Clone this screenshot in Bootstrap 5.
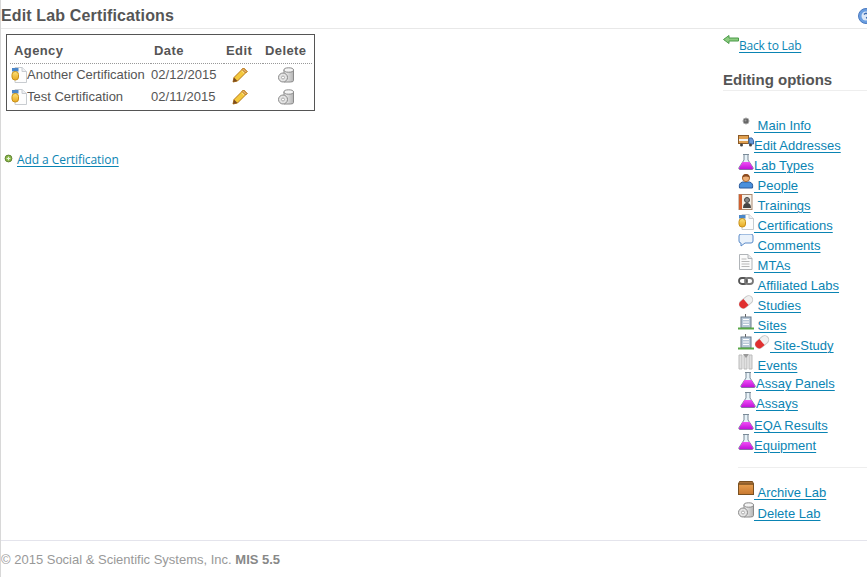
<!DOCTYPE html>
<html lang="en">
<head>
<meta charset="utf-8">
<title>Edit Lab Certifications</title>
<link href="https://cdn.jsdelivr.net/npm/bootstrap@5.3.0/dist/css/bootstrap.min.css" rel="stylesheet">
<style>
html,body{height:100%}
body{font-family:"Liberation Sans",Arial,sans-serif;font-size:13px;color:#555;background:#fff;border-left:1px solid #d8d8d8;overflow:hidden}
.shell{height:577px}
.topbar{height:29px;border-bottom:1px solid #e8e8e8}
.topbar h1{font-size:16px;font-weight:700;color:#555;margin:0;line-height:31px;letter-spacing:.14px}
.help{position:absolute;top:8px;left:858px}
a.lnk{color:#0a84b3;text-decoration:underline;text-underline-offset:2px;text-decoration-thickness:1px}
.hand{font-family:"Open Sans",sans-serif;font-size:12px;letter-spacing:-.07px}
.hand2{letter-spacing:-.2px}
.mainpane{padding:5px 0 0 5px;width:722px}
.certbox{width:309px;height:77px;border:1px solid #555;padding:3px 3px 0 3px}
.certs{border-collapse:collapse;width:302px;table-layout:fixed}
.certs th{font-weight:700;font-size:13px;height:25px;border-bottom:1px dotted #999;padding:0;letter-spacing:.4px}
.certs td{height:22px;line-height:22px;padding:0;white-space:nowrap;letter-spacing:.05px}
.certs td.agn{padding-left:1px;letter-spacing:0}
.certs svg{vertical-align:-4px}
.certs .pa{padding-left:4px;width:141px}
.certs .pd{padding-left:3px;width:73px}
.certs .pe{padding-left:2px;width:39px}
.certs .pf{padding-left:2px}
.certs .pp{padding-left:8px}
.certs .px{padding-left:15px}
.addrow{margin-top:41px;margin-left:-2px;height:16px;line-height:16px}
.sidepane{width:144px;padding-top:6px}
.backrow{height:22px;line-height:22px}
.backrow svg{position:relative;top:-1px}
.sidepane h2{font-size:15px;font-weight:700;color:#555;line-height:18px;margin:14px 0 0;padding-bottom:1px;border-bottom:1px solid #eee}
.menu{list-style:none;margin:0;padding:25px 0 0 15px}
.menu li{height:20px;line-height:20px;white-space:nowrap}
.menu li.h18{height:18px}
.menu li.h22{height:22px}
.menu li.h21{height:21px}
.menu svg{vertical-align:-2px;position:relative;top:-2px}
.ind{margin-left:2px}
.rule{border-top:1px solid #eee;margin:11px 0 15px 15px;height:0}
.foot{border-top:1px solid #e4e4ec;height:37px;line-height:38px;font-size:13px;color:#999}
.foot b{color:#888}
</style>
</head>
<body>
<svg width="0" height="0" class="d-block position-absolute">
<defs>
<linearGradient id="flask" x1="0" y1="0" x2="0" y2="1"><stop offset="0" stop-color="#f050f5"/><stop offset="1" stop-color="#c010d8"/></linearGradient>
<linearGradient id="box" x1="0" y1="0" x2="0" y2="1"><stop offset="0" stop-color="#e8a050"/><stop offset="1" stop-color="#c87830"/></linearGradient>
<linearGradient id="gold" x1="0" y1="0" x2="0" y2="1"><stop offset="0" stop-color="#fbe27a"/><stop offset="1" stop-color="#e8a820"/></linearGradient>
<linearGradient id="grey" x1="0" y1="0" x2="1" y2="0"><stop offset="0" stop-color="#f4f4f4"/><stop offset="1" stop-color="#b4b4b4"/></linearGradient>
<symbol id="i-cert" viewBox="0 0 16 16"><path d="M4 .5h7l4.500 4v11H4z" fill="#fdfdfd" stroke="#c8ccd0"/><path d="M11 .5v4h4.500" fill="#eef0f4" stroke="#c8ccd0"/><rect x="1" y="1" width="6.500" height="3.500" fill="#4a86c8"/><rect x="1" y="4.500" width="6.500" height="8.500" rx="3" fill="url(#gold)" stroke="#c89018"/></symbol>
<symbol id="i-pen" viewBox="0 0 16 16"><path d="M11.500 1l3.500 3.500L5.500 14 1 15l1-4.500z" fill="#f4c83c" stroke="#b87a18"/><path d="M10 3.500l2.500 2.500" stroke="#fbe68a" stroke-width="1.500"/><path d="M11.500 1l3.500 3.500-1.500 1.500L10 2.500z" fill="#eab070" stroke="#b87a18"/><path d="M2 10.500L5.500 14 1 15z" fill="#7a4a20"/></symbol>
<symbol id="i-del" viewBox="0 0 16 16"><path d="M6 3h9.500v10.500q0 1.500-3 1.500H6z" fill="url(#grey)" stroke="#8a8a8a"/><ellipse cx="10.700" cy="3" rx="4.800" ry="2.200" fill="#f4f4f4" stroke="#8a8a8a"/><circle cx="5" cy="10.500" r="4.500" fill="#e4e4e4" stroke="#8a8a8a"/><circle cx="5" cy="10.500" r="1.500" fill="#fff" stroke="#aaa"/></symbol>
<symbol id="i-dot" viewBox="0 0 16 16"><circle cx="8" cy="7" r="3" fill="#666" stroke="#aaa"/><circle cx="7.500" cy="6.500" r="1" fill="#999"/></symbol>
<symbol id="i-truck" viewBox="0 0 16 16"><rect x=".5" y="1.500" width="10" height="8" fill="#e0a050" stroke="#8a5a28"/><rect x="1" y="5" width="9" height="2" fill="#f4f4f4"/><path d="M11 4h3l1.500 2.500V10H11z" fill="#6a9ad8" stroke="#3a6aa8"/><circle cx="3.500" cy="11" r="1.500" fill="#444"/><circle cx="12.500" cy="11" r="1.500" fill="#444"/></symbol>
<symbol id="i-flask" viewBox="0 0 16 16"><path d="M5 .5h6M6 .5v5.500L1 13.500q-.7 2 1 2h12q1.700 0 1-2L10 6V.5" fill="#e8f2f8" stroke="#7a8a98"/><path d="M4.500 8h7L15 14q.3 1.200-1 1.200H2q-1.300 0-1-1.200z" fill="url(#flask)"/></symbol>
<symbol id="i-person" viewBox="0 0 16 16"><path d="M1.500 14q-1-5 3-6h7q4 1 3 6z" fill="#4a90dc" stroke="#2a5a9c"/><circle cx="8" cy="4" r="3.600" fill="#eeb078" stroke="#a86a30"/><path d="M4.400 3.500Q4.500 0 8 0t3.600 3.500Q8 1.500 4.400 3.500z" fill="#8a4a20"/></symbol>
<symbol id="i-train" viewBox="0 0 16 16"><rect x="1" y=".5" width="13" height="15" fill="#f4f0e8" stroke="#a88870"/><rect x="1" y=".5" width="3" height="15" fill="#d06030"/><circle cx="9" cy="6" r="2.500" fill="#888" stroke="#444"/><path d="M5 14q0-5 4-5t4 5z" fill="#444"/></symbol>
<symbol id="i-chat" viewBox="0 0 16 16"><path d="M3 0h10q2 0 2 2v5q0 2-2 2H7l-4 3V9q-2 0-2-2V2q0-2 2-2z" fill="#eaf2fb" stroke="#5a8ac8"/></symbol>
<symbol id="i-doc" viewBox="0 0 16 16"><path d="M1.500.5H10l4 4v11H1.500z" fill="#fbfbfb" stroke="#b0b4b8"/><path d="M10 .5v4h4" fill="#e8e8e8" stroke="#b0b4b8"/><path d="M3.500 5h5M3.500 7.500h8M3.500 10h8M3.500 12.500h8" stroke="#b8b8b8"/></symbol>
<symbol id="i-link" viewBox="0 0 16 16"><rect x="1" y="4" width="8" height="6" rx="3" fill="none" stroke="#555" stroke-width="1.800"/><rect x="7" y="4" width="8" height="6" rx="3" fill="none" stroke="#777" stroke-width="1.800"/></symbol>
<symbol id="i-pill" viewBox="0 0 16 16"><g transform="rotate(-40 8 8)"><rect x=".5" y="4" width="15" height="8" rx="4" fill="#f0f0f0" stroke="#c8c8c8"/><path d="M8 4H4.500a4 4 0 0 0 0 8H8z" fill="#e03030"/></g></symbol>
<symbol id="i-site" viewBox="0 0 16 16"><path d="M7 0h1v3H7z" fill="#666"/><rect x="3" y="3" width="10" height="11" fill="#b8c8d8" stroke="#6a7a8a"/><path d="M5 5.500h6M5 8h6M5 10.500h6" stroke="#fff"/><rect x="0" y="13.500" width="16" height="2" fill="#58a848"/></symbol>
<symbol id="i-evt" viewBox="0 0 16 16"><path d="M1 1h3v14H1zM6 1h3v14H6zM11 1h3v14h-3z" fill="#e0e0e0" stroke="#bbb"/><path d="M5 0h6L8 4z" fill="#999"/></symbol>
<symbol id="i-box" viewBox="0 0 16 16"><rect x=".5" y="3" width="15" height="10.500" fill="url(#box)" stroke="#7a5020"/><path d="M.5 3l1-2.500h13l1 2.500z" fill="#a87038" stroke="#7a5020"/></symbol>
<symbol id="i-back" viewBox="0 0 16 16"><path d="M.5 5.500L6 1.500v2.500h9.500v3H6v2.500z" fill="#8ccc80" stroke="#4a9a48"/></symbol>
<symbol id="i-add" viewBox="0 0 10 10"><circle cx="5" cy="5" r="3.800" fill="#8ab848" stroke="#5a7a30"/><path d="M3 5h4M5 3v4" stroke="#e8f4d8" stroke-width="1.200"/></symbol>
<symbol id="i-help" viewBox="0 0 16 16"><circle cx="8" cy="8" r="7.500" fill="#6a9ee0" stroke="#4a7ac0"/><circle cx="8" cy="8" r="4.500" fill="#dce8f8"/><path d="M6 6.500Q8 4 10 6.500T8 10" fill="none" stroke="#3a6ab0" stroke-width="1.500"/></symbol>
</defs>
</svg>
<div class="shell d-flex flex-column">
<header class="topbar"><h1>Edit Lab Certifications</h1><svg class="help" width="16" height="16"><use href="#i-help"/></svg></header>
<div class="d-flex flex-grow-1">
<main class="mainpane">
<div class="certbox">
<table class="certs">
<thead><tr><th class="pa">Agency</th><th class="pd">Date</th><th class="pe">Edit</th><th class="pf">Delete</th></tr></thead>
<tbody>
<tr><td class="agn"><svg width="16" height="16"><use href="#i-cert"/></svg>Another Certification</td><td>02/12/2015</td><td class="pp"><svg width="16" height="16"><use href="#i-pen"/></svg></td><td class="px"><svg width="16" height="16"><use href="#i-del"/></svg></td></tr>
<tr><td class="agn"><svg width="16" height="16"><use href="#i-cert"/></svg>Test Certification</td><td>02/11/2015</td><td class="pp"><svg width="16" height="16"><use href="#i-pen"/></svg></td><td class="px"><svg width="16" height="16"><use href="#i-del"/></svg></td></tr>
</tbody>
</table>
</div>
<div class="addrow d-flex align-items-center gap-1"><svg width="9" height="9" class="mb-1"><use href="#i-add"/></svg><a href="#" class="lnk hand">Add a Certification</a></div>
</main>
<aside class="sidepane">
<div class="backrow"><svg width="16" height="16" class="align-top"><use href="#i-back"/></svg><a href="#" class="lnk hand hand2">Back to Lab</a></div>
<h2>Editing options</h2>
<ul class="menu">
<li><svg width="16" height="16"><use href="#i-dot"/></svg><a href="#" class="lnk">&nbsp;Main Info</a></li>
<li><svg width="16" height="16"><use href="#i-truck"/></svg><a href="#" class="lnk">Edit Addresses</a></li>
<li><svg width="16" height="16"><use href="#i-flask"/></svg><a href="#" class="lnk">Lab Types</a></li>
<li><svg width="16" height="16"><use href="#i-person"/></svg><a href="#" class="lnk">&nbsp;People</a></li>
<li><svg width="16" height="16"><use href="#i-train"/></svg><a href="#" class="lnk">&nbsp;Trainings</a></li>
<li><svg width="16" height="16"><use href="#i-cert"/></svg><a href="#" class="lnk">&nbsp;Certifications</a></li>
<li><svg width="16" height="16"><use href="#i-chat"/></svg><a href="#" class="lnk">&nbsp;Comments</a></li>
<li><svg width="16" height="16"><use href="#i-doc"/></svg><a href="#" class="lnk">&nbsp;MTAs</a></li>
<li><svg width="16" height="16"><use href="#i-link"/></svg><a href="#" class="lnk">&nbsp;Affiliated Labs</a></li>
<li><svg width="16" height="16"><use href="#i-pill"/></svg><a href="#" class="lnk">&nbsp;Studies</a></li>
<li><svg width="16" height="16"><use href="#i-site"/></svg><a href="#" class="lnk">&nbsp;Sites</a></li>
<li><svg width="16" height="16"><use href="#i-site"/></svg><svg width="16" height="16"><use href="#i-pill"/></svg><a href="#" class="lnk">&nbsp;Site-Study</a></li>
<li class="h18"><svg width="16" height="16"><use href="#i-evt"/></svg><a href="#" class="lnk">&nbsp;Events</a></li>
<li><svg width="16" height="16" class="ind"><use href="#i-flask"/></svg><a href="#" class="lnk">Assay Panels</a></li>
<li class="h22"><svg width="16" height="16" class="ind"><use href="#i-flask"/></svg><a href="#" class="lnk">Assays</a></li>
<li><svg width="16" height="16"><use href="#i-flask"/></svg><a href="#" class="lnk">EQA Results</a></li>
<li><svg width="16" height="16"><use href="#i-flask"/></svg><a href="#" class="lnk">Equipment</a></li>
</ul>
<div class="rule"></div>
<ul class="menu pt-0">
<li class="h21"><svg width="16" height="16"><use href="#i-box"/></svg><a href="#" class="lnk">&nbsp;Archive Lab</a></li>
<li><svg width="16" height="16"><use href="#i-del"/></svg><a href="#" class="lnk">&nbsp;Delete Lab</a></li>
</ul>
</aside>
</div>
<footer class="foot">© 2015 Social &amp; Scientific Systems, Inc. <b>MIS 5.5</b></footer>
</div>
<script src="https://cdn.jsdelivr.net/npm/bootstrap@5.3.0/dist/js/bootstrap.bundle.min.js"></script>
</body>
</html>
